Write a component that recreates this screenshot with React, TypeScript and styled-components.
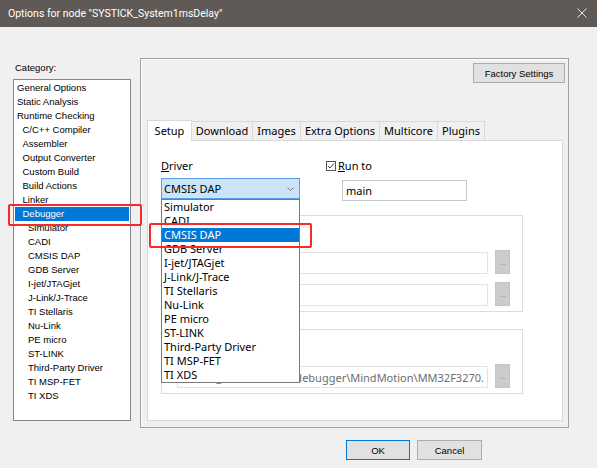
import React from "react";
import styled, { createGlobalStyle } from "styled-components";

const GlobalStyle = createGlobalStyle`
  html, body {
    margin: 0;
    padding: 0;
    background: #f0f0f0;
  }
  * {
    box-sizing: border-box;
  }
`;

const UI = `"Noto Sans", "Segoe UI", sans-serif`;
const CLASSIC = `"Liberation Sans", Arial, sans-serif`;

const Window = styled.div`
  width: 597px;
  height: 468px;
  background: #f0f0f0;
  display: flex;
  flex-direction: column;
  overflow: hidden;
`;

const TitleBar = styled.div`
  height: 27px;
  flex-shrink: 0;
  background: #5f5a55;
  display: flex;
  align-items: center;
  justify-content: space-between;
  padding: 0 9px 1px 8px;
  color: #ffffff;
  font-family: Roboto, ${UI};
  font-size: 10.5px;
`;

const CloseButton = styled.div`
  width: 12px;
  height: 12px;
  display: flex;
  align-items: center;
  justify-content: center;
`;

const Content = styled.div`
  display: flex;
  align-items: flex-start;
  padding: 31px 0 0 13px;
`;

const LeftColumn = styled.div`
  width: 118px;
  margin-top: 3px;
  display: flex;
  flex-direction: column;
`;

const CategoryLabel = styled.div`
  height: 18px;
  line-height: 14px;
  padding-left: 2px;
  font-family: ${CLASSIC};
  font-size: 9.5px;
  color: #000;
`;

const CategoryList = styled.div`
  position: relative;
  height: 342px;
  background: #ffffff;
  border: 1px solid #828790;
  padding-top: 1px;
`;

const CategoryItem = styled.div<{ $level: number; $selected?: boolean }>`
  height: 14px;
  line-height: 14px;
  margin: 0 1px;
  padding-left: ${(p) => 2 + p.$level * 5.5}px;
  font-family: ${CLASSIC};
  font-size: 9.5px;
  white-space: nowrap;
  color: ${(p) => (p.$selected ? "#ffffff" : "#000000")};
  background: ${(p) => (p.$selected ? "#0078d7" : "transparent")};
`;

const RedMark = styled.div`
  position: absolute;
  border: 2px solid #f52a2a;
  border-radius: 2px;
  pointer-events: none;
  z-index: 5;
`;

const RightPanel = styled.div`
  margin-left: 9px;
  width: 429px;
  height: 370px;
  border: 1px solid #a0a0a0;
  box-shadow: inset 1px 1px 0 #ffffff;
  display: flex;
  flex-direction: column;
  padding: 4px 3px 6px 0;
`;

const PanelTop = styled.div`
  display: flex;
  justify-content: flex-end;
`;

const ClassicButton = styled.button<{ $default?: boolean; $w: number }>`
  width: ${(p) => p.$w}px;
  height: 20px;
  padding: 0;
  background: #e1e1e1;
  border: 1px solid ${(p) => (p.$default ? "#0078d7" : "#adadad")};
  font-family: ${CLASSIC};
  font-size: 9.5px;
  color: #000;
`;

const TabStrip = styled.div`
  display: flex;
  align-items: flex-end;
  height: 21px;
  margin-top: 36px;
  padding-left: 6px;
`;

const Tab = styled.div<{ $active?: boolean; $w: number }>`
  width: ${(p) => p.$w}px;
  height: ${(p) => (p.$active ? 21 : 19)}px;
  display: flex;
  align-items: center;
  justify-content: center;
  background: ${(p) => (p.$active ? "#ffffff" : "#f0f0f0")};
  border: 1px solid #d9d9d9;
  border-bottom: none;
  border-left: ${(p) => (p.$active ? "1px solid #d9d9d9" : "none")};
  margin-bottom: ${(p) => (p.$active ? -1 : 0)}px;
  position: relative;
  z-index: ${(p) => (p.$active ? 1 : 0)};
  font-family: ${UI};
  font-size: 11px;
  color: #000;
  padding-bottom: 1px;
`;

const TabPage = styled.div`
  margin-left: 6px;
  width: 416px;
  height: 281px;
  background: #ffffff;
  border: 1px solid #d9d9d9;
  padding: 18px 0 0 13px;
`;

const TopRow = styled.div`
  display: flex;
`;

const DriverColumn = styled.div`
  width: 139px;
  display: flex;
  flex-direction: column;
`;

const FieldLabel = styled.div`
  height: 14px;
  line-height: 14px;
  font-family: ${UI};
  font-size: 11px;
  color: #000;
  display: flex;
  align-items: center;
  u {
    text-decoration: underline;
    text-underline-offset: 1px;
  }
`;

const ComboWrap = styled.div`
  position: relative;
  margin-top: 5px;
`;

const Combo = styled.div`
  height: 21px;
  background: #cce4f7;
  border: 1px solid #569de5;
  display: flex;
  align-items: center;
  justify-content: space-between;
  padding: 0 5px 0 2px;
  font-family: ${UI};
  font-size: 11px;
  color: #000;
`;

const DropList = styled.div`
  position: absolute;
  top: 21px;
  left: 0;
  width: 139px;
  background: #ffffff;
  border: 1px solid #7a7a7a;
  z-index: 4;
`;

const DropItem = styled.div<{ $selected?: boolean }>`
  height: 14px;
  line-height: 14px;
  padding-left: 2px;
  font-family: ${UI};
  font-size: 11px;
  white-space: nowrap;
  color: ${(p) => (p.$selected ? "#ffffff" : "#000000")};
  background: ${(p) => (p.$selected ? "#0078d7" : "transparent")};
`;

const RunColumn = styled.div`
  margin-left: 26px;
  display: flex;
  flex-direction: column;
`;

const CheckBox = styled.div`
  width: 10px;
  height: 10px;
  border: 1px solid #555555;
  background: #ffffff;
  margin-right: 2px;
  display: flex;
  align-items: center;
  justify-content: center;
`;

const TextField = styled.div<{ $w: number; $disabled?: boolean }>`
  width: ${(p) => p.$w}px;
  height: 22px;
  background: #ffffff;
  border: 1px solid ${(p) => (p.$disabled ? "#e3e3e3" : "#c8c8c8")};
  display: flex;
  align-items: center;
  padding: 0 3px;
  overflow: hidden;
  white-space: nowrap;
  font-family: ${UI};
  font-size: 11px;
  color: ${(p) => (p.$disabled ? "#6d6d6d" : "#000000")};
`;

const MainField = styled(TextField)`
  margin: 7px 0 0 16px;
  height: 21px;
`;

const PathText = styled.div`
  flex: 1;
  display: flex;
  justify-content: flex-end;
  overflow: hidden;
`;

const GroupBox = styled.div<{ $top: number }>`
  width: 362px;
  margin-top: ${(p) => p.$top}px;
  border: 1px solid #dcdcdc;
  padding: 34px 0 5px 15px;
  display: flex;
  flex-direction: column;
  gap: 8px;
`;

const GroupRow = styled.div`
  display: flex;
  align-items: flex-end;
`;

const BrowseButton = styled.div`
  width: 15px;
  height: 24px;
  margin-left: 7px;
  background: #cccccc;
  border: 1px solid #c4c4c4;
  display: flex;
  align-items: flex-end;
  justify-content: center;
  padding-bottom: 6px;
  font-family: ${CLASSIC};
  font-size: 8px;
  line-height: 8px;
  color: #8a8a8a;
`;

const Footer = styled.div`
  display: flex;
  gap: 7px;
  padding-left: 346px;
  margin-top: 12px;
`;

const categories: { label: string; level: number }[] = [
  { label: "General Options", level: 0 },
  { label: "Static Analysis", level: 0 },
  { label: "Runtime Checking", level: 0 },
  { label: "C/C++ Compiler", level: 1 },
  { label: "Assembler", level: 1 },
  { label: "Output Converter", level: 1 },
  { label: "Custom Build", level: 1 },
  { label: "Build Actions", level: 1 },
  { label: "Linker", level: 1 },
  { label: "Debugger", level: 1 },
  { label: "Simulator", level: 2 },
  { label: "CADI", level: 2 },
  { label: "CMSIS DAP", level: 2 },
  { label: "GDB Server", level: 2 },
  { label: "I-jet/JTAGjet", level: 2 },
  { label: "J-Link/J-Trace", level: 2 },
  { label: "TI Stellaris", level: 2 },
  { label: "Nu-Link", level: 2 },
  { label: "PE micro", level: 2 },
  { label: "ST-LINK", level: 2 },
  { label: "Third-Party Driver", level: 2 },
  { label: "TI MSP-FET", level: 2 },
  { label: "TI XDS", level: 2 },
];

const tabs = [
  { label: "Setup", w: 45 },
  { label: "Download", w: 61 },
  { label: "Images", w: 48 },
  { label: "Extra Options", w: 79 },
  { label: "Multicore", w: 58 },
  { label: "Plugins", w: 47 },
];

const drivers = [
  "Simulator",
  "CADI",
  "CMSIS DAP",
  "GDB Server",
  "I-jet/JTAGjet",
  "J-Link/J-Trace",
  "TI Stellaris",
  "Nu-Link",
  "PE micro",
  "ST-LINK",
  "Third-Party Driver",
  "TI MSP-FET",
  "TI XDS",
];

export default function App() {
  return (
    <Window>
      <GlobalStyle />
      <TitleBar>
        <span>Options for node "SYSTICK_System1msDelay"</span>
        <CloseButton>
          <svg width="10" height="10" viewBox="0 0 10 10">
            <path d="M0.5 0.5 L9.5 9.5 M9.5 0.5 L0.5 9.5" stroke="#e8e6e4" strokeWidth="1" />
          </svg>
        </CloseButton>
      </TitleBar>

      <Content>
        <LeftColumn>
          <CategoryLabel>Category:</CategoryLabel>
          <CategoryList>
            {categories.map((c) => (
              <CategoryItem key={c.label} $level={c.level} $selected={c.label === "Debugger"}>
                {c.label}
              </CategoryItem>
            ))}
            <RedMark style={{ left: -6, top: 124, width: 134, height: 22 }} />
          </CategoryList>
        </LeftColumn>

        <RightPanel>
          <PanelTop>
            <ClassicButton $w={92}>Factory Settings</ClassicButton>
          </PanelTop>
          <TabStrip>
            {tabs.map((t, i) => (
              <Tab key={t.label} $w={t.w} $active={i === 0}>
                {t.label}
              </Tab>
            ))}
          </TabStrip>
          <TabPage>
            <TopRow>
              <DriverColumn>
                <FieldLabel>
                  <span>
                    <u>D</u>river
                  </span>
                </FieldLabel>
                <ComboWrap>
                  <Combo>
                    <span>CMSIS DAP</span>
                    <svg width="7" height="4" viewBox="0 0 7 4">
                      <path d="M0.5 0.5 L3.5 3.5 L6.5 0.5" stroke="#7a7a7a" fill="none" strokeWidth="1" />
                    </svg>
                  </Combo>
                  <DropList>
                    {drivers.map((d) => (
                      <DropItem key={d} $selected={d === "CMSIS DAP"}>
                        {d}
                      </DropItem>
                    ))}
                    <RedMark style={{ left: -13, top: 23, width: 163, height: 25 }} />
                  </DropList>
                </ComboWrap>
              </DriverColumn>
              <RunColumn>
                <FieldLabel>
                  <CheckBox>
                    <svg width="8" height="8" viewBox="0 0 8 8">
                      <path d="M1 4 L3 6 L7 1.5" stroke="#444" fill="none" strokeWidth="1" />
                    </svg>
                  </CheckBox>
                  <span>
                    <u>R</u>un to
                  </span>
                </FieldLabel>
                <MainField $w={125}>main</MainField>
              </RunColumn>
            </TopRow>

            <GroupBox $top={14}>
              <GroupRow>
                <TextField $w={311} $disabled />
                <BrowseButton>...</BrowseButton>
              </GroupRow>
              <GroupRow>
                <TextField $w={311} $disabled />
                <BrowseButton>...</BrowseButton>
              </GroupRow>
            </GroupBox>

            <GroupBox $top={17}>
              <GroupRow>
                <TextField $w={311} $disabled>
                  <PathText>$TOOLKIT_DIR$\CONFIG\debugger\MindMotion\MM32F3270.</PathText>
                </TextField>
                <BrowseButton>...</BrowseButton>
              </GroupRow>
            </GroupBox>
          </TabPage>
        </RightPanel>
      </Content>

      <Footer>
        <ClassicButton $w={64} $default>
          OK
        </ClassicButton>
        <ClassicButton $w={65}>Cancel</ClassicButton>
      </Footer>
    </Window>
  );
}
